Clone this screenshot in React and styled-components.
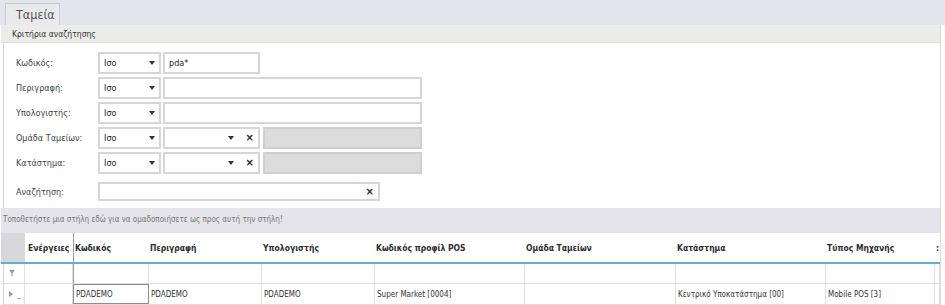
import React from 'react';
import styled, { createGlobalStyle } from 'styled-components';

const GlobalStyle = createGlobalStyle`
  body {
    margin: 0;
    background: #fff;
    font-family: 'DejaVu Sans Condensed', 'DejaVu Sans', sans-serif;
    color: #333;
  }
`;

const Page = styled.div`
  width: 945px;
  height: 305px;
  overflow: hidden;
`;

const TabStrip = styled.div`
  height: 25px;
  background: #e4e4ec;
  display: flex;
  align-items: flex-end;
  padding-left: 5px;
  box-sizing: border-box;
`;

const Tab = styled.div`
  height: 22px;
  width: 55px;
  box-sizing: border-box;
  padding-left: 10px;
  border: 1px solid #c9c9d2;
  border-bottom: none;
  background: #e9e9ee;
  font-size: 12.5px;
  color: #555;
  display: flex;
  align-items: center;
`;

const Panel = styled.div`
  margin: 0 4px 0 3px;
  border-left: 1px solid #d2d2d2;
  border-right: 1px solid #dcdcdc;
`;

const PanelHeader = styled.div`
  height: 17px;
  background: #ececea;
  border-bottom: 1px solid #dddddd;
  margin-left: -3px;
  padding-left: 11px;
  font-size: 8.5px;
  color: #333;
  display: flex;
  align-items: center;
`;

const Form = styled.div`
  padding: 9px 0 7px 12px;
  display: flex;
  flex-direction: column;
  gap: 3px;
`;

const FieldRow = styled.div`
  display: flex;
  align-items: center;
  height: ${p => p.$h || 22}px;
  margin-top: ${p => p.$top || 0}px;
`;

const Label = styled.div`
  width: 82px;
  font-size: 9px;
  color: #444;
`;

const Box = styled.div`
  box-sizing: border-box;
  height: 100%;
  width: ${p => p.$w}px;
  margin-left: ${p => p.$gap || 0}px;
  border: 2px solid ${p => (p.$disabled ? '#cfcfcf' : '#d6d6d6')};
  background: ${p => (p.$disabled ? '#dcdcdc' : '#fff')};
  display: flex;
  align-items: center;
  padding: 0 4px;
  font-size: 9px;
  color: #222;
`;

const Grow = styled.span`
  flex: 1;
`;

const Arrow = styled.span`
  width: 0;
  height: 0;
  border-left: 3px solid transparent;
  border-right: 3px solid transparent;
  border-top: 4px solid #333;
  margin-right: ${p => p.$mr || 0}px;
`;

const Clear = styled.span`
  font-family: 'DejaVu Sans', sans-serif;
  font-size: 10px;
  font-weight: bold;
  color: #222;
  line-height: 1;
`;

const GroupBar = styled.div`
  height: 25px;
  background: #e4e4ea;
  margin-left: -3px;
  padding-left: 2px;
  font-size: 8px;
  color: #777;
  display: flex;
  align-items: center;
  padding-bottom: 2px;
  box-sizing: border-box;
`;

const COLS = '24px 48px 76px 113px 113px 150px 151px 150px 109px 1fr';

const GridRow = styled.div`
  display: grid;
  grid-template-columns: ${COLS};
  margin-left: -3px;
  height: ${p => p.$h}px;
  box-sizing: border-box;
  border-bottom: ${p => p.$line};
`;

const HeadCell = styled.div`
  font-size: 8.5px;
  font-weight: bold;
  color: #2e2e2e;
  display: flex;
  align-items: center;
  padding-left: ${p => p.$pad}px;
  white-space: nowrap;
  overflow: hidden;
  background: ${p => (p.$ind ? '#d7d7dc' : '#fff')};
  border-left: ${p => (p.$split ? '1px solid #9a9a9a' : 'none')};
`;

const Cell = styled.div`
  font-size: 8px;
  display: flex;
  align-items: center;
  white-space: nowrap;
  overflow: hidden;
  box-sizing: border-box;
  border-right: 1px solid #e0e0e0;
  border-left: ${p => (p.$split ? '1px solid #9a9a9a' : 'none')};
  outline: ${p => (p.$focus ? '1px solid #8c8c8c' : 'none')};
  outline-offset: -1px;
  color: ${p => (p.$ind ? '#888' : '#333')};
  gap: 4px;
  padding-left: ${p => (p.$ind ? 8 : 2)}px;
`;

const headers = ['Ενέργειες', 'Κωδικός', 'Περιγραφή', 'Υπολογιστής', 'Κωδικός προφίλ POS', 'Ομάδα Ταμείων', 'Κατάστημα', 'Τύπος Μηχανής', ':'];
const row = ['', 'PDADEMO', 'PDADEMO', 'PDADEMO', 'Super Market [0004]', '', 'Κεντρικό Υποκατάστημα [00]', 'Mobile POS [3]', ''];

const Funnel = () => (
  <svg width="6" height="7" viewBox="0 0 6 7">
    <path d="M0 0 H6 L3.6 3 V6.5 L2.4 5.8 V3 Z" fill="#9a9a9a" />
  </svg>
);

const Tri = () => (
  <svg width="4" height="6" viewBox="0 0 4 6">
    <path d="M0 0 L4 3 L0 6 Z" fill="#999" />
  </svg>
);

function Select() {
  return (
    <Box $w={63}>
      <Grow>Ισο</Grow>
      <Arrow />
    </Box>
  );
}

function Combo() {
  return (
    <Box $w={97} $gap={2}>
      <Grow />
      <Arrow $mr={12} />
      <Clear>×</Clear>
    </Box>
  );
}

export default function App() {
  return (
    <Page>
      <GlobalStyle />
      <TabStrip>
        <Tab>Ταμεία</Tab>
      </TabStrip>
      <Panel>
        <PanelHeader>Κριτήρια αναζήτησης</PanelHeader>
        <Form>
          <FieldRow>
            <Label>Κωδικός:</Label>
            <Select />
            <Box $w={97} $gap={2}>pda*</Box>
          </FieldRow>
          <FieldRow>
            <Label>Περιγραφή:</Label>
            <Select />
            <Box $w={259} $gap={2} />
          </FieldRow>
          <FieldRow>
            <Label>Υπολογιστής:</Label>
            <Select />
            <Box $w={259} $gap={2} />
          </FieldRow>
          <FieldRow>
            <Label>Ομάδα Ταμείων:</Label>
            <Select />
            <Combo />
            <Box $w={159} $gap={3} $disabled />
          </FieldRow>
          <FieldRow>
            <Label>Κατάστημα:</Label>
            <Select />
            <Combo />
            <Box $w={159} $gap={3} $disabled />
          </FieldRow>
          <FieldRow $h={19} $top={5}>
            <Label>Αναζήτηση:</Label>
            <Box $w={282}>
              <Grow />
              <Clear>×</Clear>
            </Box>
          </FieldRow>
        </Form>
        <GroupBar>Τοποθετήστε μια στήλη εδώ για να ομαδοποιήσετε ως προς αυτή την στήλη!</GroupBar>
        <GridRow $h={31} $line="2px solid #5ab2d0">
          <HeadCell $ind $pad={0} />
          {headers.map((h, i) => (
            <HeadCell key={i} $split={i === 1} $pad={i === 0 ? 3 : 1}>{h}</HeadCell>
          ))}
        </GridRow>
        <GridRow $h={20} $line="1px solid #dedede">
          <Cell $ind><Funnel /></Cell>
          {row.map((_, i) => (
            <Cell key={i} $split={i === 1} />
          ))}
        </GridRow>
        <GridRow $h={21} $line="1px solid #dedede">
          <Cell $ind><Tri /><span>_</span></Cell>
          {row.map((v, i) => (
            <Cell key={i} $split={i === 1} $focus={i === 1}>{v}</Cell>
          ))}
        </GridRow>
      </Panel>
    </Page>
  );
}
